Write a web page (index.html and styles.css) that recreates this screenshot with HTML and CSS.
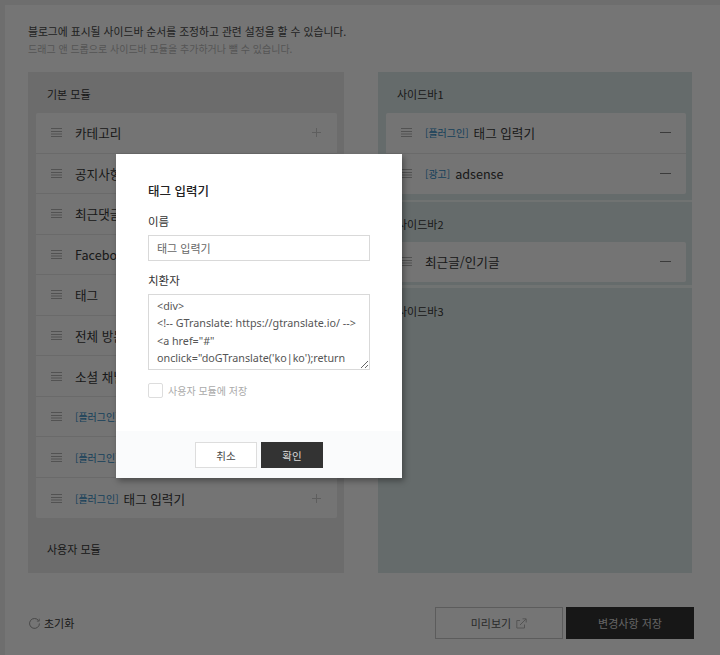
FILE: index.html
```html
<!DOCTYPE html>
<html lang="ko">
<head>
<meta charset="utf-8">
<title>사이드바</title>
<link rel="stylesheet" href="styles.css">
</head>
<body>
<svg class="defs" width="0" height="0" aria-hidden="true">
  <symbol id="drag" viewBox="0 0 11 9"><path d="M0 .5h11M0 3.5h11M0 6h11M0 8.5h11" stroke="#a5a5a5" fill="none"/></symbol>
  <symbol id="plus" viewBox="0 0 9 9"><path d="M4.5 0v9M0 4.5h9" stroke="#bdbdbd" fill="none"/></symbol>
  <symbol id="minus" viewBox="0 0 11 11"><path d="M0 5.5h11" stroke="#777" fill="none"/></symbol>
</svg>
<div class="page">
  <div class="frame">
    <div class="intro">
      <p class="intro-main">블로그에 표시될 사이드바 순서를 조정하고 관련 설정을 할 수 있습니다.</p>
      <p class="intro-sub">드래그 앤 드롭으로 사이드바 모듈을 추가하거나 뺄 수 있습니다.</p>
    </div>
    <div class="columns">
      <section class="panel panel-left">
        <h2 class="panel-title">기본 모듈</h2>
        <ul class="list">
          <li class="row"><svg class="drag"><use href="#drag"/></svg><span class="name">카테고리</span><svg class="act-plus"><use href="#plus"/></svg></li>
          <li class="row"><svg class="drag"><use href="#drag"/></svg><span class="name">공지사항</span><svg class="act-plus"><use href="#plus"/></svg></li>
          <li class="row"><svg class="drag"><use href="#drag"/></svg><span class="name">최근댓글</span><svg class="act-plus"><use href="#plus"/></svg></li>
          <li class="row"><svg class="drag"><use href="#drag"/></svg><span class="name">Facebook</span><svg class="act-plus"><use href="#plus"/></svg></li>
          <li class="row"><svg class="drag"><use href="#drag"/></svg><span class="name">태그</span><svg class="act-plus"><use href="#plus"/></svg></li>
          <li class="row"><svg class="drag"><use href="#drag"/></svg><span class="name">전체 방문자</span><svg class="act-plus"><use href="#plus"/></svg></li>
          <li class="row"><svg class="drag"><use href="#drag"/></svg><span class="name">소셜 채널</span><svg class="act-plus"><use href="#plus"/></svg></li>
          <li class="row"><svg class="drag"><use href="#drag"/></svg><span class="tag">[플러그인]</span><span class="name">배너</span><svg class="act-plus"><use href="#plus"/></svg></li>
          <li class="row"><svg class="drag"><use href="#drag"/></svg><span class="tag">[플러그인]</span><span class="name">위젯</span><svg class="act-plus"><use href="#plus"/></svg></li>
          <li class="row"><svg class="drag"><use href="#drag"/></svg><span class="tag">[플러그인]</span><span class="name">태그 입력기</span><svg class="act-plus"><use href="#plus"/></svg></li>
        </ul>
        <h2 class="panel-title user-title">사용자 모듈</h2>
      </section>
      <section class="panel panel-right">
        <div class="side side-1">
          <h2 class="panel-title">사이드바1</h2>
          <ul class="list">
            <li class="row"><svg class="drag"><use href="#drag"/></svg><span class="tag">[플러그인]</span><span class="name">태그 입력기</span><svg class="act"><use href="#minus"/></svg></li>
            <li class="row"><svg class="drag"><use href="#drag"/></svg><span class="tag">[광고]</span><span class="name">adsense</span><svg class="act"><use href="#minus"/></svg></li>
          </ul>
        </div>
        <div class="side side-2">
          <h2 class="panel-title">사이드바2</h2>
          <ul class="list">
            <li class="row"><svg class="drag"><use href="#drag"/></svg><span class="name">최근글/인기글</span><svg class="act"><use href="#minus"/></svg></li>
          </ul>
        </div>
        <div class="side side-3">
          <h2 class="panel-title">사이드바3</h2>
        </div>
      </section>
    </div>
    <div class="footer">
      <span class="reset">
        <svg class="reset-icon" viewBox="0 0 12 12"><path d="M10.4 2.8A5.4 5.4 0 1 0 11.4 6" fill="none" stroke="#888" stroke-width="1"/><path d="M8.6 3.4h2.6V.8" fill="none" stroke="#888" stroke-width=".8"/></svg>
        초기화
      </span>
      <div class="footer-actions">
        <button class="btn-preview">미리보기
          <svg class="ext-icon" viewBox="0 0 11 11"><path d="M8.5 6.5V10H.8V2.5H4M4 7l6-6M6.5.8H10.2V4.5" fill="none" stroke="#a8a8a8"/></svg>
        </button>
        <button class="btn-save">변경사항 저장</button>
      </div>
    </div>
  </div>
</div>
<div class="overlay">
  <div class="modal">
    <div class="modal-body">
      <h3 class="modal-title">태그 입력기</h3>
      <label class="field-label">이름</label>
      <input class="field-input" type="text" value="태그 입력기">
      <label class="field-label label-2">치환자</label>
      <textarea class="field-area"><div>
<!-- GTranslate: https://gtranslate.io/ -->
<a href="#"
onclick="doGTranslate('ko|ko');return false;"</textarea>
      <label class="check"><span class="check-box"></span>사용자 모듈에 저장</label>
    </div>
    <div class="modal-foot">
      <button class="btn-cancel">취소</button>
      <button class="btn-ok">확인</button>
    </div>
  </div>
</div>
</body>
</html>
```
FILE: styles.css
```css
* { box-sizing: border-box; }
html, body { margin: 0; height: 655px; overflow: hidden; }
body { font-family: "Noto Sans CJK KR", "Noto Sans", sans-serif; background: #e4e4e4; color: #222; position: relative; }
.defs { position: absolute; }
ul { list-style: none; margin: 0; padding: 0; }
h2, h3, p { margin: 0; font-weight: 400; }
button { font-family: inherit; cursor: pointer; }

.page { height: 655px; padding: 5px 0 0 5px; background: #dcdcdc; }
.frame { height: 650px; background: #eaeaea; padding: 17px 23px 0 23px; }
.intro-main { font-size: 10.8px; line-height: 18px; color: #444; }
.intro-sub { font-size: 10px; line-height: 17px; color: #aaa; }
.columns { display: grid; grid-template-columns: 316px 314px; column-gap: 34px; margin-top: 15px; }
.panel { height: 501px; }
.panel-left { background: #d8d8d8; padding: 0 7px 0 8px; }
.panel-right { background: #cbd7d6; }
.panel-title { font-size: 11px; line-height: 17px; color: #333; padding: 14px 0 0 11px; height: 41px; }
.list { background: #e9e9e9; border-radius: 2px; }
.row { height: 40.55px; display: flex; align-items: center; padding: 0 15px; font-size: 12.6px; color: #333; border-bottom: 1px solid #d4d4d4; }
.row:last-child { border-bottom: 0; }
.drag { width: 11px; height: 9px; flex: none; margin-right: 13px; }
.tag { font-size: 10px; color: #2d7fb5; margin-right: 5px; }
.name { flex: 1; }
.act { width: 11px; height: 11px; flex: none; }
.act-plus { width: 9px; height: 9px; flex: none; margin-right: 1px; }
.user-title { padding-top: 23px; }

.side { padding: 0 6px 0 8px; }
.side-1 { height: 128px; }
.side-2 { height: 88px; border-top: 2px solid #e0e6e5; border-bottom: 3px solid #e0e6e5; }
.side-2 .panel-title { height: 39.5px; }
.side-3 .panel-title { padding-top: 15px; }

.footer { display: flex; justify-content: space-between; align-items: center; height: 48px; margin: 26px 3px 0 1px; }
.reset { display: flex; align-items: center; gap: 4px; font-size: 11px; color: #333; }
.reset-icon { width: 11px; height: 11px; }
.footer-actions { display: flex; gap: 3px; }
.btn-preview { width: 128px; height: 32px; background: #ebebeb; border: 1px solid #b8b8b8; font-size: 11px; color: #555; display: flex; align-items: center; justify-content: center; gap: 5px; }
.ext-icon { width: 11px; height: 11px; }
.btn-save { width: 128px; height: 32px; background: #2e2e2e; border: 0; font-size: 11px; color: #c8c8c8; }

.overlay { position: absolute; inset: 0; background: rgba(0, 0, 0, .5); }
.modal { position: absolute; left: 116px; top: 154px; width: 286px; height: 324px; background: #fff; box-shadow: 2px 3px 6px rgba(0, 0, 0, .35); display: flex; flex-direction: column; }
.modal-body { flex: 1; padding: 28px 32px 0; display: flex; flex-direction: column; }
.modal-title { font-size: 12.5px; line-height: 18px; font-weight: 500; color: #222; margin-bottom: 13px; }
.field-label { font-size: 11.5px; line-height: 17px; color: #333; margin-bottom: 5px; }
.label-2 { margin-top: 11px; }
.field-input { width: 222px; height: 26px; border: 1px solid #d9d9d9; padding: 0 8px; font: 11px "Noto Sans CJK KR", sans-serif; color: #666; outline: 0; }
.field-area { width: 222px; height: 76px; border: 1px solid #d9d9d9; padding: 2.5px 8px; font: 10.75px/17.5px "Noto Sans", "Noto Sans CJK KR", sans-serif; color: #555; outline: 0; overflow: hidden; }
.check { display: flex; align-items: center; gap: 5px; font-size: 10px; color: #aaa; margin-top: 13px; }
.check-box { width: 15px; height: 15px; border: 1px solid #ddd; border-radius: 2px; }
.modal-foot { height: 47px; background: #fafbfc; display: flex; justify-content: center; gap: 4px; padding-top: 11px; }
.btn-cancel, .btn-ok { width: 62px; height: 26px; font-size: 10.5px; }
.btn-cancel { background: #fff; border: 1px solid #ddd; color: #444; }
.btn-ok { background: #333; border: 0; color: #ddd; }
```
